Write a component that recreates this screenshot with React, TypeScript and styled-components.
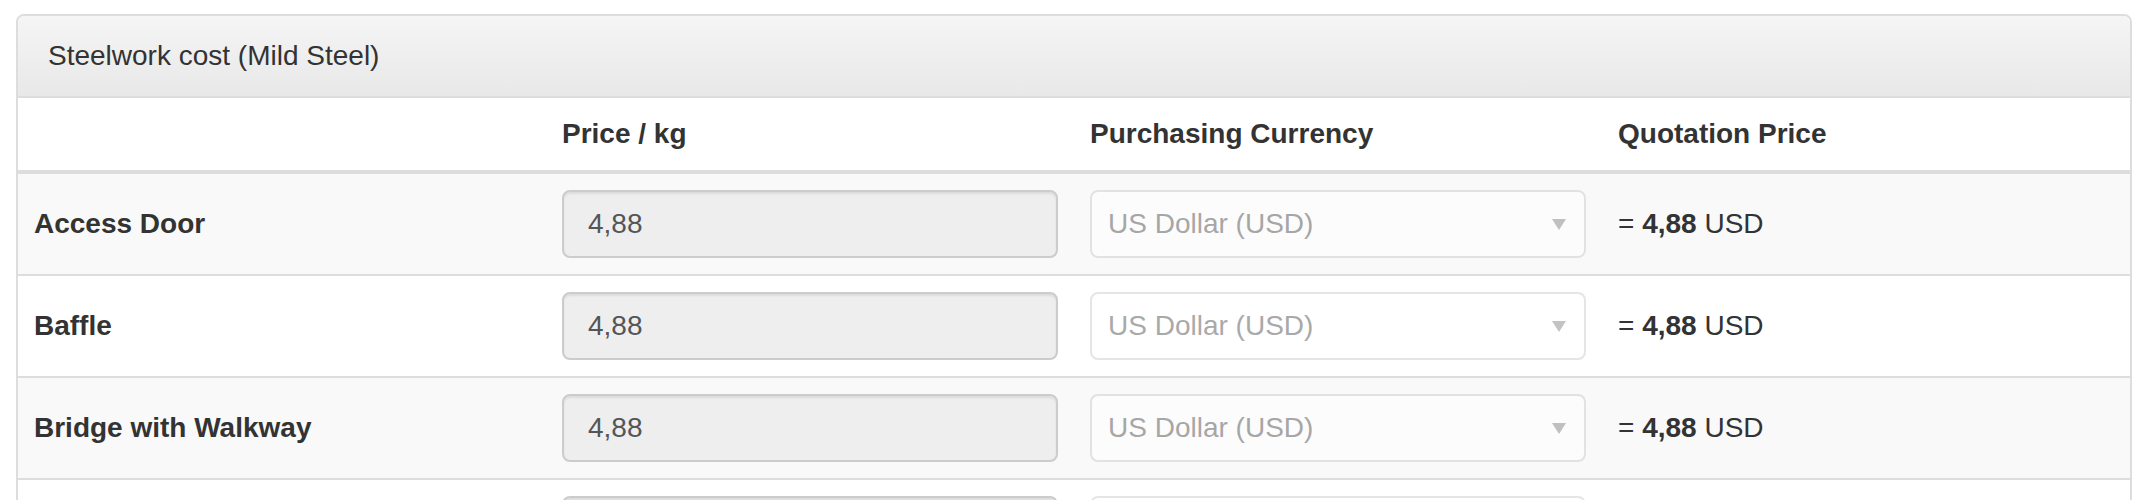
import { FC } from 'react';
import styled, { createGlobalStyle } from 'styled-components';

const Global = createGlobalStyle`
  html, body {
    margin: 0;
    padding: 0;
    background: #fff;
  }
  body {
    font-family: "Liberation Sans", Arial, sans-serif;
    font-size: 28px;
    line-height: 40px;
    color: #333;
  }
`;

const S = {
  page: styled.div`
    padding: 14px 16px;
  `,

  panel: styled.div`
    border: 2px solid #ddd;
    border-radius: 8px;
    background: #fff;
    overflow: hidden;
  `,

  heading: styled.div`
    padding: 20px 30px;
    background-image: linear-gradient(to bottom, #f5f5f5 0%, #e8e8e8 100%);
    border-bottom: 2px solid #ddd;
    font-size: 28px;
    line-height: 40px;
    color: #333;
  `,

  table: styled.table`
    width: 100%;
    border-collapse: separate;
    border-spacing: 0;
    table-layout: fixed;
  `,

  th: styled.th`
    padding: 16px;
    text-align: left;
    font-weight: bold;
    line-height: 40px;
    border-bottom: 4px solid #ddd;
  `,

  row: styled.tr<{ $striped: boolean }>`
    background: ${(p) => (p.$striped ? '#f9f9f9' : '#fff')};
  `,

  td: styled.td<{ $first: boolean }>`
    padding: 16px;
    vertical-align: middle;
    line-height: 40px;
    border-top: ${(p) => (p.$first ? 'none' : '2px solid #ddd')};
  `,

  label: styled.span`
    font-weight: bold;
  `,

  input: styled.input`
    box-sizing: border-box;
    display: block;
    width: 100%;
    height: 68px;
    padding: 12px 24px;
    font-family: inherit;
    font-size: 28px;
    line-height: 40px;
    color: #555;
    background: #eee;
    border: 2px solid #ccc;
    border-radius: 8px;
    box-shadow: inset 0 2px 2px rgba(0, 0, 0, 0.075);
    outline: none;
  `,

  select: styled.div`
    box-sizing: border-box;
    display: flex;
    align-items: center;
    justify-content: space-between;
    width: 100%;
    height: 68px;
    padding: 0 18px 0 16px;
    color: #555;
    background: #fff;
    border: 2px solid #ccc;
    border-radius: 8px;
    opacity: 0.5;
  `,

  arrow: styled.span`
    width: 0;
    height: 0;
    border-left: 7px solid transparent;
    border-right: 7px solid transparent;
    border-top: 11px solid #888;
  `,

  price: styled.span`
    white-space: nowrap;
  `,
};

const items = ['Access Door', 'Baffle', 'Bridge with Walkway', 'Cable Tray'];

const Row: FC<{ name: string; index: number }> = ({ name, index }) => {
  const first = index === 0;
  return (
    <S.row $striped={index % 2 === 0}>
      <S.td $first={first}>
        <S.label>{name}</S.label>
      </S.td>
      <S.td $first={first}>
        <S.input readOnly value="4,88" />
      </S.td>
      <S.td $first={first}>
        <S.select>
          <span>US Dollar (USD)</span>
          <S.arrow />
        </S.select>
      </S.td>
      <S.td $first={first}>
        <S.price>
          = <b>4,88</b> USD
        </S.price>
      </S.td>
    </S.row>
  );
};

export default function App() {
  return (
    <>
      <Global />
      <S.page>
        <S.panel>
          <S.heading>Steelwork cost (Mild Steel)</S.heading>
          <S.table>
            <thead>
              <tr>
                <S.th></S.th>
                <S.th>Price / kg</S.th>
                <S.th>Purchasing Currency</S.th>
                <S.th>Quotation Price</S.th>
              </tr>
            </thead>
            <tbody>
              {items.map((name, i) => (
                <Row key={name} name={name} index={i} />
              ))}
            </tbody>
          </S.table>
        </S.panel>
      </S.page>
    </>
  );
}
